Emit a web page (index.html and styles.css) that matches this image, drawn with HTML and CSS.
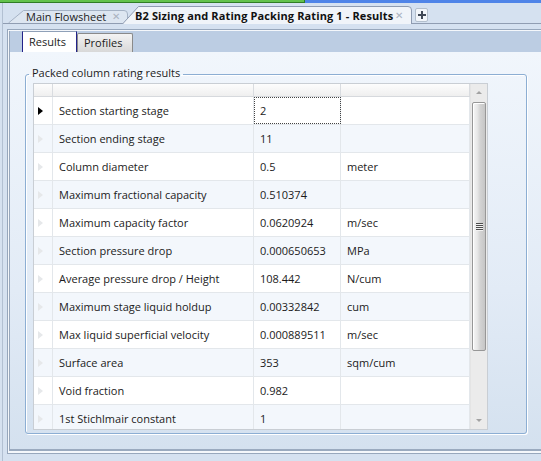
FILE: index.html
```html
<!DOCTYPE html>
<html lang="en">
<head>
    <meta charset="UTF-8">
    <title>B2 Sizing and Rating Packing Rating 1 - Results</title>
    <link rel="stylesheet" href="styles.css">
</head>
<body>
    <div class="topbar">
        <div class="topbar-green"></div>
        <div class="topbar-blue"></div>
    </div>
    <div class="window">
        <div class="doc-tabs">
            <div class="doc-tab">
                <svg class="tab-shape" width="120" height="13" viewBox="0 0 120 13">
                    <path d="M0.5 13 L15.5 0.5 H116 Q119.5 0.5 119.5 4 V13" fill="#dde6f1" stroke="#a4b2c5"/>
                </svg>
                <span class="tab-label">Main Flowsheet</span><span class="tab-close">&#x2715;</span>
            </div>
            <div class="doc-tab active">
                <svg class="tab-shape" width="290" height="18" viewBox="0 0 290 18">
                    <path d="M0.5 18 L16.5 0.5 H286 Q289.5 0.5 289.5 4 V18" fill="#f0f4f9" stroke="#8e9bb1"/>
                </svg>
                <span class="tab-label">B2 Sizing and Rating Packing Rating 1 - Results</span><span class="tab-close">&#x2715;</span>
            </div>
            <div class="tab-add">
                <svg width="10" height="10" viewBox="0 0 10 10">
                    <path d="M5 1 V9 M1 5 H9" stroke="#3f4856" stroke-width="2"/>
                </svg>
            </div>
        </div>

        <div class="doc-body">
            <div class="tab-panel">
                <div class="sheet-tabs">
                    <div class="sheet-tab active">Results</div>
                    <div class="sheet-tab">Profiles</div>
                </div>
                <div class="sheet-body">
                    <fieldset class="group">
                        <legend>Packed column rating results</legend>
                        <div class="grid">
                            <div class="grid-body">
                                <div class="row head">
                                    <div class="rh"></div><div class="c1"></div><div class="c2"></div><div class="c3"></div>
                                </div>
                                <div class="row">
                                    <div class="rh"><span class="arrow current"></span></div>
                                    <div class="c1">Section starting stage</div><div class="c2 focus">2</div><div class="c3"></div>
                                </div>
                                <div class="row alt">
                                    <div class="rh"><span class="arrow"></span></div>
                                    <div class="c1">Section ending stage</div><div class="c2">11</div><div class="c3"></div>
                                </div>
                                <div class="row">
                                    <div class="rh"><span class="arrow"></span></div>
                                    <div class="c1">Column diameter</div><div class="c2">0.5</div><div class="c3">meter</div>
                                </div>
                                <div class="row alt">
                                    <div class="rh"><span class="arrow"></span></div>
                                    <div class="c1">Maximum fractional capacity</div><div class="c2">0.510374</div><div class="c3"></div>
                                </div>
                                <div class="row">
                                    <div class="rh"><span class="arrow"></span></div>
                                    <div class="c1">Maximum capacity factor</div><div class="c2">0.0620924</div><div class="c3">m/sec</div>
                                </div>
                                <div class="row alt">
                                    <div class="rh"><span class="arrow"></span></div>
                                    <div class="c1">Section pressure drop</div><div class="c2">0.000650653</div><div class="c3">MPa</div>
                                </div>
                                <div class="row">
                                    <div class="rh"><span class="arrow"></span></div>
                                    <div class="c1">Average pressure drop / Height</div><div class="c2">108.442</div><div class="c3">N/cum</div>
                                </div>
                                <div class="row alt">
                                    <div class="rh"><span class="arrow"></span></div>
                                    <div class="c1">Maximum stage liquid holdup</div><div class="c2">0.00332842</div><div class="c3">cum</div>
                                </div>
                                <div class="row">
                                    <div class="rh"><span class="arrow"></span></div>
                                    <div class="c1">Max liquid superficial velocity</div><div class="c2">0.000889511</div><div class="c3">m/sec</div>
                                </div>
                                <div class="row alt">
                                    <div class="rh"><span class="arrow"></span></div>
                                    <div class="c1">Surface area</div><div class="c2">353</div><div class="c3">sqm/cum</div>
                                </div>
                                <div class="row">
                                    <div class="rh"><span class="arrow"></span></div>
                                    <div class="c1">Void fraction</div><div class="c2">0.982</div><div class="c3"></div>
                                </div>
                                <div class="row alt">
                                    <div class="rh"><span class="arrow"></span></div>
                                    <div class="c1">1st Stichlmair constant</div><div class="c2">1</div><div class="c3"></div>
                                </div>
                            </div>
                            <div class="scrollbar">
                                <div class="sb-btn"><span class="sb-up"></span></div>
                                <div class="sb-thumb"><span class="sb-grip"></span></div>
                                <div class="sb-track"></div>
                                <div class="sb-btn"><span class="sb-down"></span></div>
                            </div>
                        </div>
                    </fieldset>
                </div>
            </div>
        </div>
    </div>
</body>
</html>
```

FILE: styles.css
```css
body {
    margin: 0;
    width: 541px;
    height: 461px;
    overflow: hidden;
    background-color: #d5e1f0;
    font-family: 'Open Sans', 'Noto Sans', sans-serif;
    font-size: 11px;
    color: #1b1b1b;
}
.topbar {
    display: flex;
    height: 3px;
}
.topbar-green {
    width: 304px;
    background-color: #63c24c;
    border-right: 1px solid #2f7d25;
    border-bottom: 1px solid #2f7d25;
}
.topbar-blue {
    flex: 1;
    background-color: #4f84e8;
}
.window {
    margin-left: 2px;
    border-left: 1px solid #b2c0d2;
    height: 458px;
}
.doc-tabs {
    display: flex;
    align-items: flex-end;
    height: 20px;
    padding-left: 5px;
    border-bottom: 1px solid #909db2;
}
.doc-tab {
    position: relative;
    display: flex;
    align-items: center;
    width: 120px;
    height: 13px;
    line-height: 13px;
    padding-left: 18px;
    box-sizing: border-box;
}
.doc-tab.active {
    width: 290px;
    height: 18px;
    margin-left: -6px;
    margin-bottom: -1px;
    padding-left: 13px;
    font-weight: bold;
    color: #111;
}
.doc-tab.active .tab-label {
    letter-spacing: 0.12px;
}
.tab-shape {
    position: absolute;
    left: 0;
    top: 0;
}
.tab-label,
.tab-close {
    position: relative;
}
.tab-close {
    margin-left: 6px;
    font-size: 10px;
    font-weight: normal;
    color: #a9b2bf;
}
.doc-tab.active .tab-close {
    margin-left: 2px;
}
.tab-add {
    display: flex;
    align-items: center;
    justify-content: center;
    width: 13px;
    height: 14px;
    margin: 0 0 1px 3px;
    border: 1px solid #b3bfcd;
    border-radius: 2px;
    background-color: #f1f5fa;
    box-sizing: border-box;
}
.doc-body {
    margin: 5px 0 0 4px;
    border: 1px solid #97a7bc;
    border-right: none;
    padding: 1px 0 2px 1px;
    background-color: #f4f7fb;
}
.tab-panel {
    border-left: 1px solid #97a7bc;
    border-bottom: 2px solid #9aaabf;
}
.sheet-tabs {
    display: flex;
    align-items: flex-end;
    height: 21px;
    padding-left: 12px;
    background-color: #bccde3;
}
.sheet-tab {
    height: 19px;
    line-height: 18px;
    padding-left: 6px;
    width: 56px;
    box-sizing: border-box;
    border: 1px solid #8a8a8a;
    border-bottom: none;
    border-radius: 2px 2px 0 0;
    background: linear-gradient(#f3f3f3, #d8d8d8);
}
.sheet-tab.active {
    height: 21px;
    line-height: 20px;
    width: 55px;
    background: #fff;
    border-color: #8fa0b8 #23238a;
    border-radius: 0;
}
.sheet-body {
    height: 397px;
    overflow: hidden;
    background: linear-gradient(#f1f6fc, #e2ebf6 60%, #d4e1ef);
    padding-top: 14px;
    box-sizing: border-box;
}
.group {
    margin: 0 14px 0 15px;
    padding: 0 0 3px 7px;
    border: 1px solid #8caed3;
    border-radius: 3px;
    box-shadow: 1px 1px 0 #fff, inset 1px 1px 0 #fff;
}
.group legend {
    margin-left: -4px;
    padding: 0 3px 3px;
    line-height: 14px;
    color: #1b1b1b;
}
.grid {
    display: flex;
    width: 455px;
    height: 347px;
    border: 1px solid #c9ced4;
    box-sizing: border-box;
    background-color: #fff;
}
.grid-body {
    flex: 1;
    overflow: hidden;
}
.row {
    display: flex;
    height: 28px;
    border-bottom: 1px solid #e3e7eb;
    box-sizing: border-box;
}
.row.head {
    height: 13px;
    border-bottom-color: #d6d9dd;
    background: linear-gradient(#fdfdfd, #efefef);
}
.row > div {
    display: flex;
    align-items: center;
    padding-left: 6px;
    border-right: 1px solid #e3e7eb;
    box-sizing: border-box;
    white-space: nowrap;
}
.row.head > div {
    border-right-color: #d9dce0;
}
.row.alt > div {
    background-color: #f3f7fc;
}
.row > .rh {
    width: 19px;
    padding-left: 4px;
    background-color: #fff;
}
.row.head > .rh {
    background: none;
}
.c1 {
    width: 201px;
}
.c2 {
    width: 87px;
}
.c3 {
    flex: 1;
}
.row > .focus {
    outline: 1px dotted #444;
    outline-offset: -1px;
}
.arrow {
    width: 0;
    height: 0;
    border-left: 5px solid #e6e8ea;
    border-top: 4px solid transparent;
    border-bottom: 4px solid transparent;
}
.arrow.current {
    border-left-color: #000;
}
.scrollbar {
    display: flex;
    flex-direction: column;
    width: 17px;
    background-color: #ebebeb;
    border-left: 1px solid #e4e4e4;
    box-sizing: border-box;
}
.sb-btn {
    display: flex;
    align-items: center;
    justify-content: center;
    height: 17px;
}
.sb-up {
    border-left: 3px solid transparent;
    border-right: 3px solid transparent;
    border-bottom: 3px solid #a2a2a2;
}
.sb-down {
    border-left: 3px solid transparent;
    border-right: 3px solid transparent;
    border-top: 3px solid #a2a2a2;
}
.sb-thumb {
    display: flex;
    align-items: center;
    justify-content: center;
    height: 247px;
    margin: 1px 1px 0 1px;
    border: 1px solid #979797;
    border-radius: 2px;
    background: linear-gradient(to right, #f6f6f6, #e8e8e8 35%, #d3d3d3 60%, #c6c6c6);
    box-shadow: inset 1px 1px 0 #fff;
}
.sb-grip {
    width: 7px;
    height: 8px;
    background: repeating-linear-gradient(#4d4d4d 0 1px, #f2f2f2 1px 2px);
}
.sb-track {
    flex: 1;
}
```
